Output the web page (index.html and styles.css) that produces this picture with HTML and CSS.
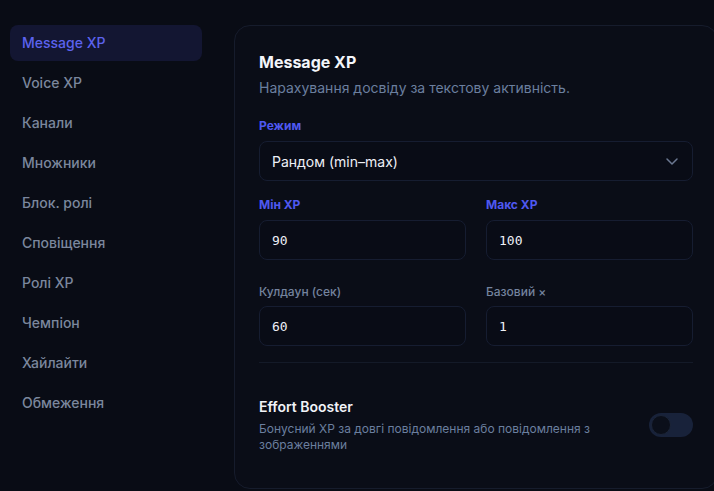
FILE: index.html
```html
<!DOCTYPE html>
<html lang="uk">
<head>
<meta charset="utf-8">
<link rel="stylesheet" href="styles.css">
</head>
<body>
<div class="layout">
  <nav class="sidebar">
    <a class="nav-item active">Message XP</a>
    <a class="nav-item">Voice XP</a>
    <a class="nav-item">Канали</a>
    <a class="nav-item">Множники</a>
    <a class="nav-item">Блок. ролі</a>
    <a class="nav-item">Сповіщення</a>
    <a class="nav-item">Ролі XP</a>
    <a class="nav-item">Чемпіон</a>
    <a class="nav-item">Хайлайти</a>
    <a class="nav-item">Обмеження</a>
  </nav>
  <section class="card">
    <h2 class="card-title">Message XP</h2>
    <p class="card-sub">Нарахування досвіду за текстову активність.</p>

    <div class="field mode">
      <label class="label accent">Режим</label>
      <div class="select">
        <span>Рандом (min–max)</span>
        <svg class="chev" width="16" height="16" viewBox="0 0 16 16" fill="none"><path d="M3 6l5 5 5-5" stroke="#6b7891" stroke-width="1.5" stroke-linecap="round" stroke-linejoin="round"/></svg>
      </div>
    </div>

    <div class="grid row1">
      <div class="field">
        <label class="label accent">Мін XP</label>
        <div class="input">90</div>
      </div>
      <div class="field">
        <label class="label accent">Макс XP</label>
        <div class="input">100</div>
      </div>
    </div>

    <div class="grid row2">
      <div class="field">
        <label class="label muted">Кулдаун (сек)</label>
        <div class="input">60</div>
      </div>
      <div class="field">
        <label class="label muted">Базовий ×</label>
        <div class="input">1</div>
      </div>
    </div>

    <hr class="divider">

    <div class="toggle-row">
      <div class="toggle-text">
        <div class="toggle-title">Effort Booster</div>
        <div class="toggle-desc">Бонусний XP за довгі повідомлення або повідомлення з зображеннями</div>
      </div>
      <div class="switch"><span class="knob"></span></div>
    </div>
  </section>
</div>
</body>
</html>
```

FILE: styles.css
```css
* { box-sizing: border-box; }
html, body {
  margin: 0;
  background: #090c15;
  overflow: hidden;
}
body {
  font-family: Inter, "Noto Sans", sans-serif;
  color: #e6e9f1;
  width: 714px;
  height: 491px;
}
.layout {
  display: grid;
  grid-template-columns: 192px 484px;
  column-gap: 32px;
  padding: 25px 0 0 10px;
  align-items: start;
}
.sidebar {
  display: flex;
  flex-direction: column;
  gap: 4px;
}
.nav-item {
  display: flex;
  align-items: center;
  height: 36px;
  padding: 0 12px 1px;
  border-radius: 8px;
  font-size: 14px;
  font-weight: 500;
  color: #7b879d;
}
.nav-item.active {
  background: #131632;
  color: #5c63ee;
}
.card {
  border: 1px solid #161c2c;
  border-radius: 16px;
  background: #0a0d17;
  padding: 24px 24px 24px;
  height: 464px;
}
.card-title {
  margin: 0;
  font-size: 16px;
  line-height: 24px;
  font-weight: 700;
  color: #f3f5fa;
}
.card-sub {
  margin: 4px 0 0;
  font-size: 14px;
  line-height: 20px;
  color: #6b7f9f;
}
.field {
  display: flex;
  flex-direction: column;
}
.mode { margin-top: 20px; }
.label {
  font-size: 12px;
  line-height: 16px;
  font-weight: 700;
  margin-bottom: 7px;
}
.label.accent { color: #4f58f0; }
.label.muted {
  color: #74839e;
  font-size: 12px;
  font-weight: 500;
}
.select, .input {
  height: 40px;
  border: 1px solid #161d31;
  border-radius: 8px;
  background: #090c16;
  display: flex;
  align-items: center;
  padding: 0 12px;
}
.select {
  justify-content: space-between;
  font-size: 14px;
  color: #eef0f6;
}
.input {
  font-family: "DejaVu Sans Mono", "Liberation Mono", monospace;
  font-size: 13px;
  color: #eef0f6;
}
.grid {
  display: grid;
  grid-template-columns: 1fr 1fr;
  column-gap: 20px;
}
.row1 { margin-top: 16px; }
.row2 { margin-top: 24px; }
.row2 .label { margin-bottom: 6px; }
.divider {
  border: 0;
  border-top: 1px solid #141a28;
  margin: 16px 0 22px;
}
.toggle-row {
  display: flex;
  align-items: center;
  gap: 16px;
  padding: 12px 0;
}
.toggle-text { flex: 1; }
.toggle-title {
  font-size: 14px;
  line-height: 20px;
  font-weight: 600;
  color: #f1f3f8;
}
.toggle-desc {
  margin-top: 4px;
  font-size: 12px;
  line-height: 16px;
  color: #6b7f9f;
}
.switch {
  width: 44px;
  height: 24px;
  border-radius: 12px;
  background: #18223a;
  padding: 2px;
  flex-shrink: 0;
  display: flex;
  align-items: center;
}
.knob {
  width: 20px;
  height: 20px;
  border-radius: 50%;
  background: #0b0f1a;
  border: 1px solid #1b2438;
}
```
